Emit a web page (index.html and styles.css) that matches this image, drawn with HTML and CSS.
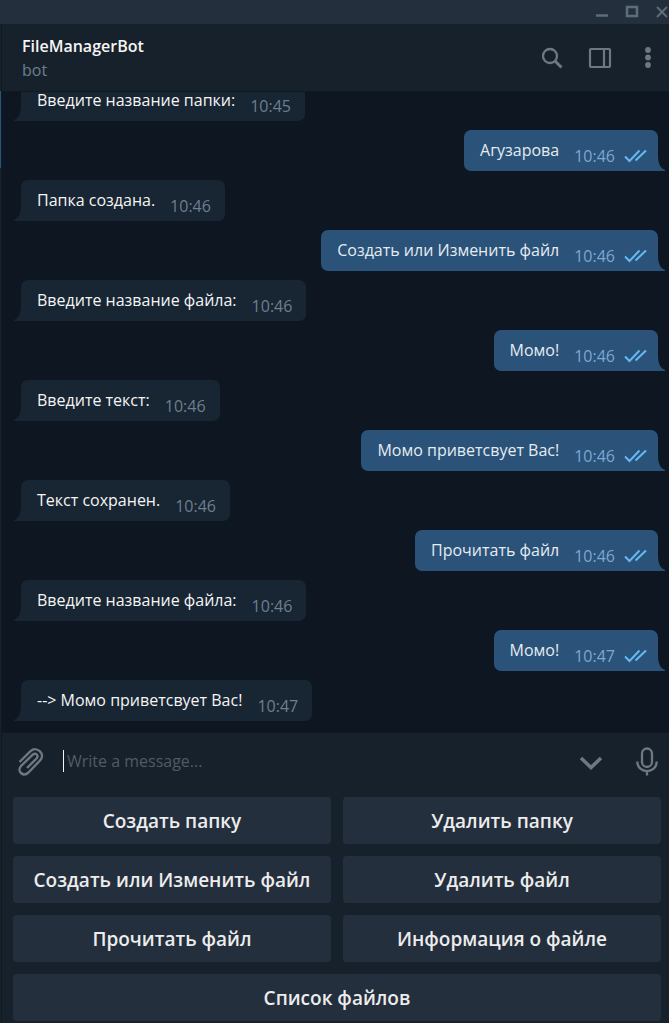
FILE: index.html
```html
<!DOCTYPE html>
<html lang="ru">
<head>
<meta charset="utf-8">
<meta name="viewport" content="width=device-width, initial-scale=1">
<title>FileManagerBot</title>
<link rel="stylesheet" href="styles.css">
</head>
<body>
<svg class="defs" aria-hidden="true">
  <symbol id="read" viewBox="0 0 24 16"><path d="M1 8.500 5.500 13 15.500 2.500M11.500 12.500 22 2.500" fill="none" stroke="currentColor" stroke-width="2"/></symbol>
  <symbol id="tail" viewBox="0 0 8 16"><path d="M0 0C0 8 2 13 7 15V16H0Z" fill="currentColor"/></symbol>
</svg>
<div class="window">
  <div class="titlebar">
    <button class="win-button" aria-label="Minimize"><svg width="14" height="14" viewBox="0 0 14 14"><path d="M1 10.500h12" stroke="currentColor" stroke-width="2.500"/></svg></button>
    <button class="win-button" aria-label="Maximize"><svg width="14" height="14" viewBox="0 0 14 14"><path d="M2 2h10v9H2z" fill="none" stroke="currentColor" stroke-width="2.500"/></svg></button>
    <button class="win-button" aria-label="Close"><svg width="14" height="14" viewBox="0 0 14 14"><path d="M2 2l10 10M12 2 2 12" stroke="currentColor" stroke-width="2"/></svg></button>
  </div>
  <div class="content">
    <aside class="sidebar"><div class="sidebar-active"></div></aside>
    <main class="chat">
      <header class="header">
        <div class="peer">
          <h1 class="peer-name">FileManagerBot</h1>
          <p class="peer-status">bot</p>
        </div>
        <div class="actions">
          <button class="icon-button" aria-label="Search"><svg width="24" height="24" viewBox="0 0 24 24" fill="none" stroke="currentColor"><circle cx="10" cy="10" r="7" stroke-width="2.300"/><path d="m15 15 6.500 6.500" stroke-width="3"/></svg></button>
          <button class="icon-button" aria-label="Side panel"><svg width="24" height="24" viewBox="0 0 24 24" fill="none" stroke="currentColor" stroke-width="2.200"><rect x="2" y="3" width="20" height="18" rx="1"/><path d="M16 3v18"/></svg></button>
          <button class="icon-button" aria-label="More"><svg width="24" height="24" viewBox="0 0 24 24" fill="currentColor"><circle cx="12" cy="4" r="2.900"/><circle cx="12" cy="11.500" r="2.900"/><circle cx="12" cy="19" r="2.900"/></svg></button>
        </div>
      </header>
      <section class="messages">
        <article class="bubble in"><p>Введите название папки:</p><time>10:45</time><svg class="tail"><use href="#tail"/></svg></article>
        <article class="bubble out"><p>Агузарова</p><time>10:46</time><svg class="read"><use href="#read"/></svg><svg class="tail"><use href="#tail"/></svg></article>
        <article class="bubble in"><p>Папка создана.</p><time>10:46</time><svg class="tail"><use href="#tail"/></svg></article>
        <article class="bubble out"><p>Создать или Изменить файл</p><time>10:46</time><svg class="read"><use href="#read"/></svg><svg class="tail"><use href="#tail"/></svg></article>
        <article class="bubble in"><p>Введите название файла:</p><time>10:46</time><svg class="tail"><use href="#tail"/></svg></article>
        <article class="bubble out"><p>Момо!</p><time>10:46</time><svg class="read"><use href="#read"/></svg><svg class="tail"><use href="#tail"/></svg></article>
        <article class="bubble in"><p>Введите текст:</p><time>10:46</time><svg class="tail"><use href="#tail"/></svg></article>
        <article class="bubble out"><p>Момо приветсвует Вас!</p><time>10:46</time><svg class="read"><use href="#read"/></svg><svg class="tail"><use href="#tail"/></svg></article>
        <article class="bubble in"><p>Текст сохранен.</p><time>10:46</time><svg class="tail"><use href="#tail"/></svg></article>
        <article class="bubble out"><p>Прочитать файл</p><time>10:46</time><svg class="read"><use href="#read"/></svg><svg class="tail"><use href="#tail"/></svg></article>
        <article class="bubble in"><p>Введите название файла:</p><time>10:46</time><svg class="tail"><use href="#tail"/></svg></article>
        <article class="bubble out"><p>Момо!</p><time>10:47</time><svg class="read"><use href="#read"/></svg><svg class="tail"><use href="#tail"/></svg></article>
        <article class="bubble in"><p>--&gt; Момо приветсвует Вас!</p><time>10:47</time><svg class="tail"><use href="#tail"/></svg></article>
      </section>
      <form class="composer">
        <button type="button" class="icon-button" aria-label="Attach"><svg width="28" height="32" viewBox="0 0 28 32" fill="none" stroke="currentColor" stroke-width="2.400"><path d="M3.500 16 14.500 5.200C21 -.5 30 8 24 14.500L12.500 26.500C7 31.500.5 25 5 20L16.500 8.800C20 6 23 9.500 20.500 12.500L11 22" stroke-linejoin="round"/></svg></button>
        <span class="caret"></span>
        <input class="field" type="text" aria-label="Message" placeholder="Write a message...">
        <button type="button" class="icon-button" aria-label="Hide keyboard"><svg width="24" height="24" viewBox="0 0 24 24" fill="none" stroke="currentColor" stroke-width="3.500"><path d="m2 8 10 9.500L22 8"/></svg></button>
        <button type="button" class="icon-button mic" aria-label="Record voice"><svg width="24" height="32" viewBox="0 0 24 32" fill="none" stroke="currentColor" stroke-width="2.300"><rect x="7" y="2.500" width="10" height="18.500" rx="5"/><path d="M2.300 15.500c0 12.700 19.400 12.700 19.400 0M12 25V29.500"/></svg></button>
      </form>
      <div class="keyboard">
        <button class="key">Создать папку</button>
        <button class="key">Удалить папку</button>
        <button class="key">Создать или Изменить файл</button>
        <button class="key">Удалить файл</button>
        <button class="key">Прочитать файл</button>
        <button class="key">Информация о файле</button>
        <button class="key wide">Список файлов</button>
      </div>
    </main>
  </div>
</div>
</body>
</html>
```
FILE: styles.css
```css
* { box-sizing: border-box; }

body {
  margin: 0;
  background: #0e1621;
  color: #f5f5f5;
  font: 16px/22px "Open Sans", "Noto Sans", sans-serif;
}

h1, p { margin: 0; }

button {
  padding: 0;
  border: 0;
  background: none;
  color: inherit;
  font: inherit;
}

svg { display: block; }

.defs { position: absolute; width: 0; height: 0; }

.window {
  display: flex;
  flex-direction: column;
  height: 100vh;
  overflow: hidden;
}

.titlebar {
  display: flex;
  flex: none;
  justify-content: flex-end;
  gap: 16px;
  height: 24px;
  background: #242f3d;
}

.win-button {
  display: flex;
  flex: none;
  align-items: center;
  padding-bottom: 1px;
  color: #5c6d7a;
}

.content { display: flex; flex: 1; min-height: 0; }

.sidebar {
  flex: none;
  width: 2px;
  padding-top: 67px;
  border-right: 1px solid #101a23;
  background: #17212b;
}

.sidebar-active { height: 77px; background: #2b5278; }

.chat { display: flex; flex: 1; flex-direction: column; min-width: 0; }

.header {
  display: flex;
  flex: none;
  justify-content: space-between;
  align-items: center;
  padding: 10px 9px 9px 20px;
  border-bottom: 1px solid #101a23;
  background: #17212b;
}

.peer-name { font-size: 16px; line-height: 24px; font-weight: 600; }
.peer-status { line-height: 24px; color: #6d7f8f; }

.actions { display: flex; gap: 24px; }

.icon-button { display: flex; flex: none; color: #6c7883; }

.messages {
  display: flex;
  flex: 1;
  flex-direction: column;
  justify-content: flex-end;
  gap: 9px;
  min-height: 0;
  padding: 0 11px 11px 19px;
  overflow: hidden;
}

.bubble {
  position: relative;
  display: flex;
  flex: none;
  align-items: flex-start;
  padding: 9px 14px 10px 16px;
  border-radius: 7px;
}

.bubble time { margin: 6px 0 -6px 15px; }

.in { align-self: flex-start; border-bottom-left-radius: 0; background: #182533; }
.in time { color: #6d7f8f; }

.out { align-self: flex-end; padding-right: 10px; border-bottom-right-radius: 0; background: #2b5278; }
.out p { color: #e4ecf2; }
.out time { color: #7da8d3; }

.read { width: 24px; height: 16px; margin: 9px 0 -6px 9px; color: #65b9f4; }

.tail { position: absolute; bottom: 0; left: 100%; width: 8px; height: 16px; color: #2b5278; }
.in .tail { right: 100%; left: auto; color: #182533; transform: scaleX(-1); }

.composer {
  display: flex;
  flex: none;
  align-items: center;
  height: 58px;
  padding: 0 10px 0 14px;
  border-top: 1px solid #101a23;
  background: #17212b;
}

.caret { flex: none; width: 1px; height: 22px; margin: 0 0 2px 19px; background: #f5f5f5; }

.field {
  flex: 1;
  min-width: 0;
  padding: 0 3px 2px;
  border: 0;
  outline: 0;
  background: none;
  color: #f5f5f5;
  font: inherit;
}

.field::placeholder { color: #4f5b67; opacity: 1; }

.mic { margin-left: 32px; }

.keyboard {
  display: grid;
  flex: none;
  grid-template-columns: 1fr 1fr;
  gap: 12px;
  padding: 7px 8px 2px 11px;
  background: #17212b;
}

.key {
  min-height: 47px;
  border-radius: 4px;
  background: #242f3d;
  color: #ececec;
  font-size: 19px;
  font-weight: 600;
}

.wide { grid-column: 1 / -1; }
```
